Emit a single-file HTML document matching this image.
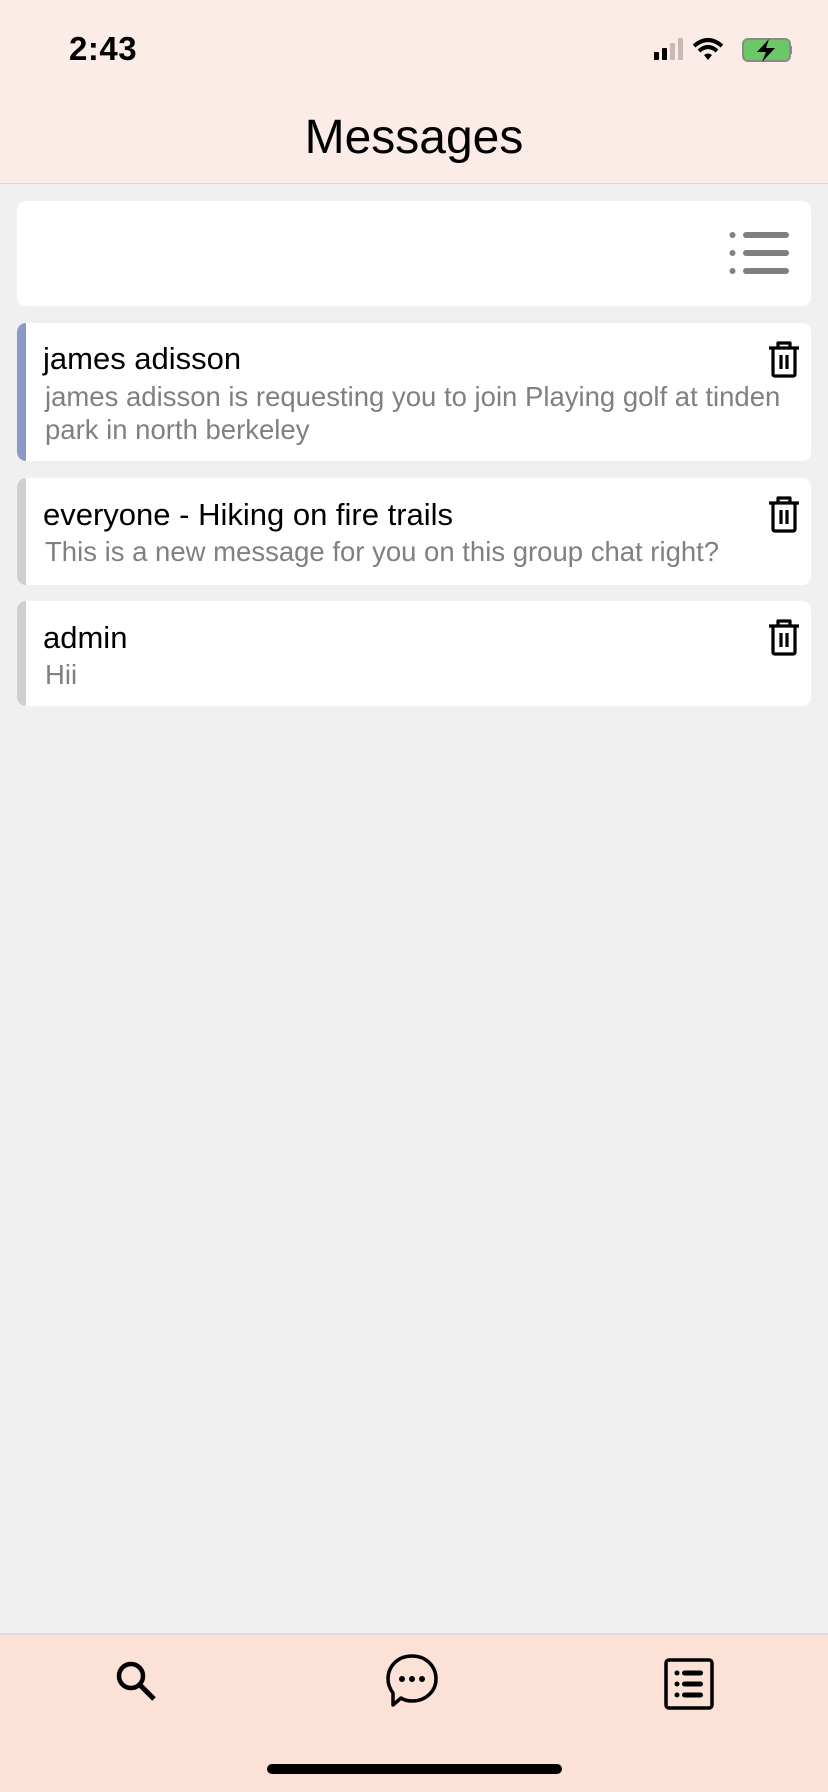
<!DOCTYPE html>
<html><head><meta charset="utf-8"><style>
*{margin:0;padding:0;box-sizing:border-box}
body{width:828px;height:1792px;background:#f0f0f0;font-family:"Liberation Sans",Roboto,sans-serif;position:relative;overflow:hidden}
.hdr{position:absolute;left:0;top:0;width:828px;height:184px;background:#fbece8;border-bottom:1px solid #d8d8d8}
.time{position:absolute;left:69px;top:30px;font-size:33px;font-weight:bold;letter-spacing:0.5px}
.title{position:absolute;left:0;width:828px;top:112px;text-align:center;font-size:48px;line-height:52px}
.card{position:absolute;left:17px;width:794px;background:#fff;border-radius:9px;overflow:hidden}
.bar{position:absolute;left:0;top:0;bottom:0;width:9px;background:#cfcfcf}
.name{position:absolute;left:26px;font-size:31px;color:#000}
.sub{position:absolute;left:28px;font-size:27.5px;color:#808080;line-height:33px;width:770px}
.trash{position:absolute;left:750px}
.nav{position:absolute;left:0;top:1633px;width:828px;height:159px;background:#fbe1d6;border-top:2px solid #dcdcdc}
.home{position:absolute;left:267px;top:1764px;width:295px;height:10px;border-radius:5px;background:#000}
</style></head><body>
<div class="hdr">
<div class="time">2:43</div>
<svg style="position:absolute;left:652px;top:36px" width="140" height="28" viewBox="0 0 140 28">
<rect x="2" y="16" width="5" height="8" rx="1" fill="#000"/>
<rect x="10" y="12" width="5" height="12" rx="1" fill="#000"/>
<rect x="18" y="7" width="5" height="17" rx="1" fill="#c9b9b6"/>
<rect x="26" y="2" width="5" height="22" rx="1" fill="#c9b9b6"/>
<path d="M42 10 Q56 -2 70 10" stroke="#000" stroke-width="4" fill="none"/>
<path d="M47 15 Q56 7 65 15" stroke="#000" stroke-width="4" fill="none"/>
<path d="M52 19 L56 24 L60 19 Q56 16 52 19Z" fill="#000"/>
<rect x="91" y="3" width="47" height="22" rx="5" fill="#6cc867" stroke="#8a8a8a" stroke-width="2"/>
<rect x="138" y="10" width="2" height="8" fill="#8a8a8a"/>
<path d="M117 3 L105 16 L114 16 L110 26 L123 12 L114 12 Z" fill="#000"/>
</svg>
<div class="title">Messages</div>
</div>

<div class="card" style="top:201px;height:105px">
<svg style="position:absolute;left:712px;top:30px" width="62" height="44" viewBox="0 0 62 44">
<g fill="#808080"><circle cx="3.5" cy="4" r="3"/><circle cx="3.5" cy="22" r="3"/><circle cx="3.5" cy="40" r="3"/>
<rect x="14" y="1" width="46" height="6" rx="3"/><rect x="14" y="19" width="46" height="6" rx="3"/><rect x="14" y="37" width="46" height="6" rx="3"/></g>
</svg>
</div>

<div class="card" style="top:323px;height:138px">
<div class="bar" style="background:#8a9ac8"></div>
<div class="name" style="top:18px">james adisson</div>
<div class="sub" style="top:57px">james adisson is requesting you to join Playing golf at tinden park in north berkeley</div>
<svg class="trash" style="top:17px" width="34" height="38" viewBox="0 0 34 38"><path d="M2 8 H32 M11 8 V3 H23 V8 M6 8 V34 Q6 36 8 36 H26 Q28 36 28 34 V8 M14 15 V29 M20 15 V29" stroke="#000" stroke-width="3.2" fill="none" stroke-linejoin="round"/></svg>
</div>

<div class="card" style="top:478px;height:107px">
<div class="bar"></div>
<div class="name" style="top:19px">everyone - Hiking on fire trails</div>
<div class="sub" style="top:57px">This is a new message for you on this group chat right?</div>
<svg class="trash" style="top:17px" width="34" height="38" viewBox="0 0 34 38"><path d="M2 8 H32 M11 8 V3 H23 V8 M6 8 V34 Q6 36 8 36 H26 Q28 36 28 34 V8 M14 15 V29 M20 15 V29" stroke="#000" stroke-width="3.2" fill="none" stroke-linejoin="round"/></svg>
</div>

<div class="card" style="top:601px;height:105px">
<div class="bar"></div>
<div class="name" style="top:19px">admin</div>
<div class="sub" style="top:57px">Hii</div>
<svg class="trash" style="top:17px" width="34" height="38" viewBox="0 0 34 38"><path d="M2 8 H32 M11 8 V3 H23 V8 M6 8 V34 Q6 36 8 36 H26 Q28 36 28 34 V8 M14 15 V29 M20 15 V29" stroke="#000" stroke-width="3.2" fill="none" stroke-linejoin="round"/></svg>
</div>

<div class="nav">
<svg style="position:absolute;left:114px;top:24px" width="46" height="46" viewBox="0 0 46 46"><circle cx="17" cy="17" r="12" stroke="#000" stroke-width="4.5" fill="none"/><path d="M26 26 L40 40" stroke="#000" stroke-width="5"/></svg>
<svg style="position:absolute;left:382px;top:16px" width="60" height="60" viewBox="0 0 60 60"><path d="M30 5 C16 5 6 15 6 28 C6 34 8 38 11 42 L11 54 L19 47 C22 49 26 50 30 50 C44 50 54 40 54 28 C54 15 44 5 30 5Z" stroke="#000" stroke-width="3.5" fill="none" stroke-linejoin="round"/><circle cx="20" cy="28" r="3" fill="#000"/><circle cx="30" cy="28" r="3" fill="#000"/><circle cx="40" cy="28" r="3" fill="#000"/></svg>
<svg style="position:absolute;left:664px;top:23px" width="50" height="52" viewBox="0 0 50 52"><rect x="2" y="2" width="46" height="48" rx="3" stroke="#000" stroke-width="3.5" fill="none"/><g fill="#000"><circle cx="13" cy="15" r="2.5"/><circle cx="13" cy="26" r="2.5"/><circle cx="13" cy="37" r="2.5"/><rect x="18" y="12.5" width="21" height="5" rx="2.5"/><rect x="18" y="23.5" width="21" height="5" rx="2.5"/><rect x="18" y="34.5" width="21" height="5" rx="2.5"/></g></svg>
</div>
<div class="home"></div>
</body></html>
